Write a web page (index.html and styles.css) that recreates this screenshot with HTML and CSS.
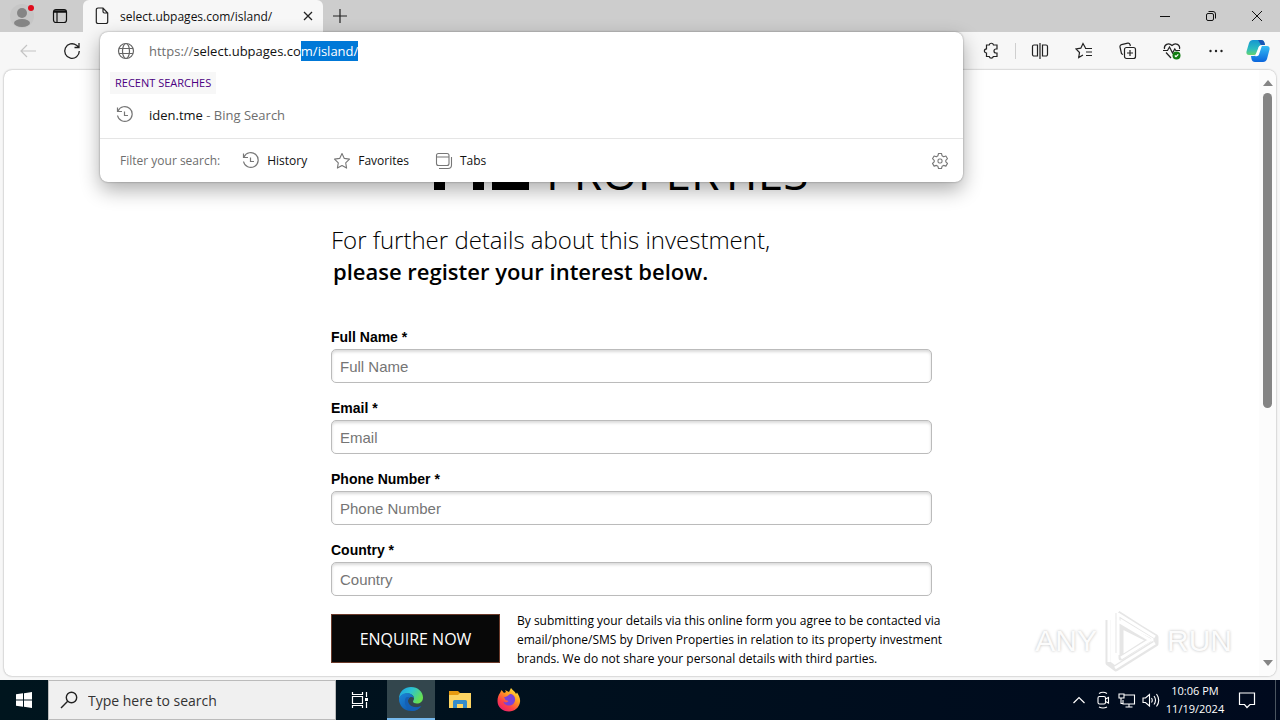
FILE: index.html
```html
<!DOCTYPE html>
<html lang="en">
<head>
  <meta charset="UTF-8">
  <meta name="viewport" content="width=device-width, initial-scale=1.0">
  <title>select.ubpages.com/island/</title>
  <link rel="stylesheet" href="styles.css">
</head>
<body>
  <header class="titlebar">
    <button class="profile" aria-label="Profile">
      <svg width="24" height="24" viewBox="0 0 24 24"><circle cx="12" cy="12" r="12" fill="#c6c6c6"/><circle cx="12" cy="9" r="5" fill="#858585"/><ellipse cx="12" cy="19" rx="8" ry="4" fill="#858585"/><circle cx="21" cy="4" r="3" fill="#e00b1c"/></svg>
    </button>
    <button class="tab-actions" aria-label="Tab actions">
      <svg width="16" height="16" viewBox="0 0 16 16" fill="none" stroke="#111" stroke-width="1.2"><rect x="1.5" y="1.5" width="13" height="13" rx="2.5"/><path d="M2 3.500h12" stroke-width="2.500"/><path d="M5 4v10"/></svg>
    </button>
    <div class="tab">
      <svg width="14" height="18" viewBox="0 0 14 18" fill="none" stroke="#222" stroke-width="1.2"><path d="M8 1H3a1.7 1.7 0 0 0-1.7 1.7v12A1.7 1.7 0 0 0 3 16.500h8a1.7 1.7 0 0 0 1.7-1.8V6zM8 1v3.500A1.5 1.5 0 0 0 9.500 6h3.200"/></svg>
      <span class="tab-title">select.ubpages.com/island/</span>
      <button aria-label="Close tab">
        <svg width="10" height="10" viewBox="0 0 10 10" stroke="#222" stroke-width="1.3"><path d="M1 1l8 8M9 1L1 9"/></svg>
      </button>
    </div>
    <button class="new-tab" aria-label="New tab">
      <svg width="14" height="14" viewBox="0 0 14 14" stroke="#222" stroke-width="1.2"><path d="M7 0v14M0 7h14"/></svg>
    </button>
    <div class="window-buttons">
      <button aria-label="Minimize"><svg width="12" height="12" viewBox="0 0 12 12" stroke="#111"><path d="M1 6.500h10"/></svg></button>
      <button aria-label="Restore"><svg width="12" height="12" viewBox="0 0 12 12" fill="none" stroke="#111"><rect x="1.5" y="3.5" width="7" height="7" rx="1.5"/><path d="M3.500 1.500h4.500a2.5 2.5 0 0 1 2.500 2.500v4.500"/></svg></button>
      <button aria-label="Close"><svg width="12" height="12" viewBox="0 0 12 12" stroke="#111"><path d="M1 1l10 10M11 1L1 11"/></svg></button>
    </div>
  </header>

  <nav class="toolbar">
    <button aria-label="Back"><svg width="18" height="16" viewBox="0 0 18 16" fill="none" stroke="#c4c4c4" stroke-width="1.2"><path d="M8 2L2 8l6 6M2 8h15"/></svg></button>
    <button aria-label="Refresh"><svg width="18" height="18" viewBox="0 0 18 18" fill="none" stroke="#222" stroke-width="1.3"><path d="M16.300 9A7.300 7.300 0 1 1 13.500 3.300L16 5.300M16 1v4.500h-4.500"/></svg></button>
    <div class="tools">
      <button aria-label="Extensions"><svg width="18" height="18" viewBox="0 0 18 18" fill="none" stroke="#222" stroke-width="1.2"><path d="M4.500 3h2.700a2.200 2.200 0 0 1 4.300 0H15v4h-1a2 2 0 0 0 0 4h1v3.500h-3.700a2.100 2.100 0 0 1-4.100 0H4.500V11a2.100 2.100 0 0 1 0-4.200z"/></svg></button>
      <span class="divider"></span>
      <button aria-label="Split screen"><svg width="18" height="18" viewBox="0 0 18 18" fill="none" stroke="#222" stroke-width="1.2"><path d="M6.500 3H3a1.500 1.500 0 0 0-1.500 1.500v8A1.500 1.500 0 0 0 3 14h3.500zM11.500 3H15a1.500 1.500 0 0 1 1.500 1.500v8A1.500 1.500 0 0 1 15 14h-3.500zM9 1v16"/></svg></button>
      <button aria-label="Favorites"><svg width="18" height="18" viewBox="0 0 18 18" fill="none" stroke="#222" stroke-width="1.2"><path d="M10.500 6L8 1.500 5.800 6.200l-4.800.8 3.500 3.500-.8 5L8 13M10 6.500h7M11 10h6M11 13.500h6"/></svg></button>
      <button aria-label="Collections"><svg width="18" height="18" viewBox="0 0 18 18" fill="none" stroke="#222" stroke-width="1.2"><path d="M4 12.500l-1.500-.8L1 5a2 2 0 0 1 1.500-2.400l6.300-1.400A2 2 0 0 1 11 2.500l.4 1.500"/><rect x="5.5" y="5.5" width="11" height="11" rx="2"/><path d="M11 8v6M8 11h6"/></svg></button>
      <button aria-label="Browser essentials"><svg width="18" height="18" viewBox="0 0 18 18" fill="none" stroke="#222" stroke-width="1.2"><path d="M1.500 7C.6 3 5.500-.2 9 3.500 12.500-.2 17.500 3 16.500 7M3 10.500L8 16M0 8.500h4.500L6.500 5l3 6 2.300-4 1 1.500H17"/><circle cx="13.5" cy="13.5" r="4" fill="#107c10" stroke="none"/><path d="M11.800 13.500l1.200 1.200 2.300-2.400" stroke="#fff"/></svg></button>
      <button aria-label="Settings and more"><svg width="18" height="18" viewBox="0 0 18 18" fill="#222"><circle cx="3.5" cy="9" r="1.2"/><circle cx="9" cy="9" r="1.2"/><circle cx="14.5" cy="9" r="1.2"/></svg></button>
      <button class="copilot" aria-label="Copilot">
        <svg width="24" height="24" viewBox="0 0 24 24">
          <defs>
            <linearGradient id="copilotLeft" x1="0" y1="0" x2="0" y2="1"><stop offset="0" stop-color="#1596d1"/><stop offset=".6" stop-color="#2cbcc0"/><stop offset="1" stop-color="#65d46f"/></linearGradient>
            <linearGradient id="copilotRight" x1="0" y1="0" x2="0" y2="1"><stop offset="0" stop-color="#35bdf4"/><stop offset="1" stop-color="#0b65dc"/></linearGradient>
          </defs>
          <path d="M7 1h8c2 0 3 1 3.500 3l.5 2h-3c-2 0-3 1-3.500 3l-1 4c-.6 2-1.500 3-3.500 3H3c-2 0-3-1.500-2.500-3.500L3 4c.7-2 2-3 4-3z" fill="url(#copilotLeft)"/>
          <path d="M12 1h3c2 0 3 1 3.500 3l.5 2h-4z" fill="#1a55b5"/>
          <path d="M17 23H9c-2 0-3-1-3.500-3L5 17h3c2 0 3-1 3.500-3l1-4c.6-2 1.500-3 3.500-3h5c2 0 3 1.500 2.500 3.500L21 20c-.7 2-2 3-4 3z" fill="url(#copilotRight)"/>
          <path d="M12.500 8.500C13 7 14 6.500 16 6.500L13 15.500C12.500 17 11 17.500 9 17z" fill="#fff"/>
        </svg>
      </button>
    </div>
  </nav>

  <section class="omnibox">
    <div class="address">
      <svg width="18" height="18" viewBox="0 0 18 18" fill="none" stroke="#666" stroke-width="1.2"><circle cx="9" cy="9" r="7.5"/><ellipse cx="9" cy="9" rx="3.5" ry="7.5"/><path d="M2 6.500h14M2 11.500h14"/></svg>
      <div class="url" role="textbox" contenteditable="true" aria-label="Address" spellcheck="false"><span class="muted">https://</span>select.ubpages.co<mark>m/island/</mark></div>
    </div>
    <h2>RECENT SEARCHES</h2>
    <a class="suggestion" href="#">
      <svg width="18" height="18" viewBox="0 0 18 18" fill="none" stroke="#777" stroke-width="1.2"><path d="M1.500 1.500v4H6M2 5A7.400 7.400 0 1 1 1.500 9.500M8.500 5.500v4H12"/></svg>
      <span>iden.tme <span class="muted">- Bing Search</span></span>
    </a>
    <div class="filters">
      <span class="muted filter-label">Filter your search:</span>
      <button>
        <svg width="18" height="18" viewBox="0 0 18 18" fill="none" stroke="#777" stroke-width="1.2"><path d="M1.500 1.500v4H6M2 5A7.400 7.400 0 1 1 1.500 9.500M8.500 5.500v4H12"/></svg>
        History
      </button>
      <button>
        <svg width="18" height="18" viewBox="0 0 18 18" fill="none" stroke="#777" stroke-width="1.1"><path d="M9 1.500l2.300 4.900 5.200.7-3.800 3.700.9 5.300L9 13.500l-4.600 2.600.9-5.300L1.500 7.100l5.200-.7z" stroke-linejoin="round"/></svg>
        Favorites
      </button>
      <button>
        <svg width="18" height="18" viewBox="0 0 18 18" fill="none" stroke="#777" stroke-width="1.1"><rect x="1.5" y="1.5" width="12.5" height="12" rx="2"/><path d="M1.500 5H14M4 16.500h9a3.500 3.500 0 0 0 3.500-3.500V5"/></svg>
        Tabs
      </button>
      <button class="filter-settings" aria-label="Search settings">
        <svg width="18" height="18" viewBox="0 0 18 18" fill="none" stroke="#777" stroke-width="1.1"><path d="M7.500 1.500h3l.6 2.300 1.500.9 2.300-.7 1.600 2.700L14.800 8.300v1.500l1.700 1.600-1.600 2.700-2.300-.7-1.500.9-.6 2.200h-3l-.6-2.200-1.500-.9-2.300.7-1.600-2.700 1.700-1.600V8.300L1.500 6.700 3.100 4l2.300.7 1.500-.9z" stroke-linejoin="round"/><rect x="7" y="7" width="4" height="4" rx="1.5"/></svg>
      </button>
    </div>
  </section>

  <div class="viewport">
    <main class="page">
      <div class="logo">
        <svg width="96" height="48" viewBox="0 0 96 48"><path d="M0 0h12l13 20L38 0h12v48H39V18L25 38 11 18v30H0zM58 0h37v10H70v9h22v9H70v10h25v10H58z"/></svg>
        <span>PROPERTIES</span>
      </div>
      <h1>For further details about this investment, <strong>please register your interest below.</strong></h1>
      <form>
        <label for="full_name">Full Name *</label>
        <input type="text" id="full_name" placeholder="Full Name" required>
        <label for="email">Email *</label>
        <input type="email" id="email" placeholder="Email" required>
        <label for="phone">Phone Number *</label>
        <input type="tel" id="phone" placeholder="Phone Number" required>
        <label for="country">Country *</label>
        <input type="text" id="country" placeholder="Country" required>
        <div class="submit-row">
          <button type="submit">ENQUIRE NOW</button>
          <p>By submitting your details via this online form you agree to be contacted via email/phone/SMS by Driven Properties in relation to its property investment brands. We do not share your personal details with third parties.</p>
        </div>
      </form>
    </main>
    <div class="scrollbar">
      <svg width="10" height="6" viewBox="0 0 10 6" fill="#858585"><path d="M5 0l5 6H0z"/></svg>
      <div class="thumb"></div>
      <svg width="10" height="6" viewBox="0 0 10 6" fill="#858585"><path d="M0 0h10L5 6z"/></svg>
    </div>
  </div>

  <div class="watermark">
    <span>ANY</span>
    <svg width="58" height="62" viewBox="0 0 58 62" fill="none"><path d="M15 3l36 23M15 3v40M5 10v43l8 6 40-25V27L15 4M18 16v32l28-18zM13 57l38-24" stroke="#e6e6e6" stroke-width="5" stroke-linejoin="round"/><path d="M15 3v42M6 10v42M15 4l37 23M15 11l32 19-29 18M12 58l40-25" stroke="#fff" stroke-width="3"/></svg>
    <span>RUN</span>
  </div>

  <footer class="taskbar">
    <button class="start" aria-label="Start"><svg width="16" height="16" viewBox="0 0 16 16" fill="#fff"><path d="M0 2.300l7-1v6.200H0zM8 1.200L16 0v7.500H8zM0 8.500h7v6.200l-7-1zM8 8.500h8V16l-8-1.200z"/></svg></button>
    <label class="search">
      <svg width="18" height="18" viewBox="0 0 18 18" fill="none" stroke="#222" stroke-width="1.4"><circle cx="11.5" cy="6.5" r="5.2"/><path d="M7.700 10.300L1 17"/></svg>
      <input type="text" placeholder="Type here to search" aria-label="Type here to search">
    </label>
    <button class="app" aria-label="Task view"><svg width="18" height="18" viewBox="0 0 18 18" fill="none" stroke="#fff" stroke-width="1.2"><path d="M1.500 1v2.500h10V1M1.500 17v-2.500h10V17M1.500 5.500h10v7h-10zM15.500 1v5M15.500 11v6"/><path d="M14 7h3v3h-3z" fill="#fff" stroke="none"/></svg></button>
    <button class="app active" aria-label="Microsoft Edge">
      <svg width="24" height="24" viewBox="0 0 24 24">
        <defs>
          <linearGradient id="edgeTop" x1="0" y1="0" x2="1" y2=".5"><stop offset="0" stop-color="#1b9de2"/><stop offset=".5" stop-color="#2cc3d2"/><stop offset="1" stop-color="#66e052"/></linearGradient>
          <linearGradient id="edgeLow" x1="0" y1="0" x2="1" y2="1"><stop offset="0" stop-color="#1b86d8"/><stop offset="1" stop-color="#0c4da2"/></linearGradient>
        </defs>
        <path d="M0 12C0 4 6 0 12 0c7 0 12 5 12 10.500 0 4-3 6-6 6-2.500 0-4-1-4-2 0-.8 1-1.200 1-3C15 8.500 12 6.500 8.500 6.500 4 6.500 1 9 0 12z" fill="url(#edgeTop)"/>
        <path d="M0 12c.8-4 4-5.800 8-5.800 3.500 0 6.500 2 7 4.800-3-2.500-6-.5-6 3 0 5 5.500 8 12.500 5.200C19.500 22.200 16 24 12 24 5 24 0 18.500 0 12z" fill="url(#edgeLow)"/>
        <path d="M7 10.500C4 15 7 22 13 24c4 0 7.500-2 9.500-5-6 3-13.500 0-13.500-5 0-1.700.7-3 1.800-3.700-1.300-.6-2.800-.5-3.800.2z" fill="#1460b5"/>
      </svg>
    </button>
    <button class="app" aria-label="File Explorer"><svg width="24" height="20" viewBox="0 0 24 20"><path d="M1 1h9l2 2h10v5H1z" fill="#e69a10"/><path d="M1 5h9l2-2h11v15H1z" fill="#fcd462"/><path d="M5 18V11.500A1.500 1.500 0 0 1 6.500 10h11a1.500 1.500 0 0 1 1.500 1.500V18h-4v-4H9v4z" fill="#348ccb"/></svg></button>
    <button class="app" aria-label="Firefox">
      <svg width="24" height="24" viewBox="0 0 24 24">
        <defs><linearGradient id="fox" x1=".9" y1="0" x2=".2" y2="1"><stop offset="0" stop-color="#fff044"/><stop offset=".4" stop-color="#ff9a20"/><stop offset=".7" stop-color="#ff4444"/><stop offset="1" stop-color="#e81c70"/></linearGradient></defs>
        <path d="M3 5l1.500-3L7 5l2-1-1-2 4 2 2-4c2 2.500 4 3.500 5 6l1-1.500c2 3 3.500 6 3 9.500-.7 5.500-5.500 9.500-11 9.500C5.500 23.500.5 19 .5 13 .5 9.500 1.500 7 3 5z" fill="url(#fox)"/>
        <path d="M7 9c4 0 4-3 7-3 3 1 4.500 3.500 4 6.500-.5 3-3 5-6 5s-5.500-2-5.500-4c2 1.500 4 1 5-.5L8.500 12z" fill="#7a42d8"/>
      </svg>
    </button>
    <div class="tray">
      <button aria-label="Show hidden icons"><svg width="14" height="18" viewBox="0 0 14 18" fill="none" stroke="#fff" stroke-width="1.2"><path d="M1.500 12L7 6.500l5.500 5.500"/></svg></button>
      <button aria-label="Meet now"><svg width="16" height="18" viewBox="0 0 16 18" fill="none" stroke="#fff" stroke-width="1.1"><rect x="3" y="5.5" width="7.5" height="7.5" rx="1.5"/><path d="M10.500 8l3-1.500v5.500l-3-1.500M4 2.500q4-2.500 8 0M4 16q4 2 8 0"/></svg></button>
      <button aria-label="Network"><svg width="18" height="18" viewBox="0 0 18 18" fill="none" stroke="#fff" stroke-width="1.1"><path d="M6 4h10.500v9H5V9M11 13v3M7.500 16h7M1 3h5v4H1zM3 7v5.500h2"/></svg></button>
      <button aria-label="Volume"><svg width="18" height="18" viewBox="0 0 18 18" fill="none" stroke="#fff" stroke-width="1.1"><path d="M1 7v4.500h2.500L7.500 15V3.500L3.500 7zM9.500 7q1.500 2.300 0 4.500M12 5q3 4.300 0 8.500M14.500 3q4.500 6.300 0 12.500"/></svg></button>
      <time datetime="2024-11-19T22:06">10:06 PM<br>11/19/2024</time>
      <button class="notifications" aria-label="Notifications"><svg width="18" height="18" viewBox="0 0 18 18" fill="none" stroke="#fff" stroke-width="1.2"><path d="M1.500 2h15v11.500H12L9 16.500l-2.500-3h-5z"/></svg></button>
      <span class="show-desktop"></span>
    </div>
  </footer>
</body>
</html>
```

FILE: styles.css
```css
* {
  box-sizing: border-box;
}

body {
  margin: 0;
  height: 100vh;
  display: flex;
  flex-direction: column;
  position: relative;
  overflow: hidden;
  background-color: #f7f7f7;
  font-family: "Open Sans", sans-serif;
  font-size: 12px;
  color: #111;
}

button {
  display: flex;
  align-items: center;
  justify-content: center;
  padding: 0;
  border: none;
  background: none;
  font-family: inherit;
  font-size: inherit;
  color: inherit;
}

svg {
  flex: none;
}

/* title bar */
.titlebar {
  display: flex;
  flex: none;
  height: 32px;
  background-color: #cdcdcd;
}

.profile {
  width: 44px;
}

.tab-actions {
  width: 32px;
}

.tab {
  display: flex;
  align-items: center;
  width: 240px;
  margin-left: 7px;
  padding: 0 10px 0 12px;
  background-color: #f7f7f7;
  border-radius: 6px 6px 0 0;
}

.tab-title {
  flex: 1;
  margin-left: 11px;
  white-space: nowrap;
}

.new-tab {
  width: 34px;
}

.window-buttons {
  display: flex;
  margin-left: auto;
}

.window-buttons button {
  width: 46px;
}

/* toolbar */
.toolbar {
  display: flex;
  align-items: center;
  flex: none;
  height: 38px;
  padding: 0 2px 0 6px;
}

.toolbar button {
  width: 44px;
  height: 32px;
}

.tools {
  display: flex;
  align-items: center;
  margin-left: auto;
}

.divider {
  width: 1px;
  height: 16px;
  margin: 0 2px;
  background-color: #cfcfcf;
}

.toolbar .copilot {
  width: 40px;
}

/* address drop-down */
.omnibox {
  position: absolute;
  z-index: 2;
  top: 32px;
  left: 100px;
  right: 317px;
  background-color: #fff;
  border-radius: 8px;
  box-shadow: 0 0 2px rgba(0, 0, 0, 0.4), 0 8px 20px rgba(0, 0, 0, 0.32);
}

.address,
.suggestion {
  display: flex;
  align-items: center;
  gap: 14px;
  height: 38px;
  padding-left: 17px;
  font-size: 13px;
}

.url {
  outline: none;
}

.url mark {
  padding: 1px 0;
  background-color: #0078d7;
  color: #fff;
}

.muted {
  color: #6e6e6e;
}

.omnibox h2 {
  width: fit-content;
  margin: 2px 0 0 10px;
  padding: 0 5px;
  background-color: #f7f7f7;
  font-size: 11px;
  font-weight: 400;
  line-height: 22px;
  color: #4b0082;
}

.suggestion {
  height: 44px;
  padding: 0 0 2px 16px;
  gap: 15px;
  color: #111;
  text-decoration: none;
}

.filters {
  display: flex;
  align-items: center;
  height: 44px;
  padding: 0 14px 0 20px;
  border-top: 1px solid #e5e5e5;
}

.filter-label {
  margin-right: 22px;
}

.filters button {
  gap: 7px;
  margin-right: 26px;
}

.filters .filter-settings {
  margin: 0 0 0 auto;
}

/* page */
.viewport {
  display: flex;
  flex: 1;
  min-height: 0;
  margin: 0 4px 4px;
  overflow: hidden;
  background-color: #fff;
  border-radius: 8px;
  box-shadow: 0 0 2px rgba(0, 0, 0, 0.4);
}

.page {
  flex: 1;
  padding: 72px 16px 0;
  overflow: hidden;
}

.logo,
.page h1,
.page form {
  max-width: 601px;
  margin: 0 auto;
}

.logo {
  display: flex;
  align-items: flex-end;
  gap: 16px;
  height: 48px;
  padding-left: 103px;
  font-size: 46px;
  line-height: 36px;
  color: #000;
}

.page h1 {
  margin-top: 34px;
  font-size: 24px;
  font-weight: 300;
  line-height: 32px;
  color: #000;
}

.page strong {
  display: block;
  padding-left: 2px;
  font-size: 22px;
  font-weight: 600;
  line-height: 30px;
}

.page form {
  margin-top: 41px;
}

.page form label {
  display: block;
  margin-bottom: 2px;
  font: bold 14px/20px "Liberation Sans", Arial, sans-serif;
  color: #000;
}

.page form input {
  display: block;
  width: 100%;
  height: 34px;
  margin-bottom: 15px;
  padding: 0 8px;
  border: 1px solid #bbb;
  border-radius: 5px;
  box-shadow: inset 0 2px 3px rgba(0, 0, 0, 0.15);
  font: 15px "Liberation Sans", Arial, sans-serif;
}

.page form input::placeholder {
  color: #757575;
}

.submit-row {
  display: flex;
  align-items: flex-start;
  gap: 17px;
  margin-right: -20px;
}

.submit-row button {
  flex: none;
  width: 169px;
  height: 49px;
  margin-top: 3px;
  background-color: #080808;
  border: 1px solid #6b3a2a;
  font-size: 16px;
  color: #fff;
}

.submit-row p {
  margin: 0;
  line-height: 19px;
  color: #000;
}

.scrollbar {
  display: flex;
  flex-direction: column;
  align-items: center;
  width: 17px;
  padding: 10px 0;
  background-color: #fcfcfc;
}

.thumb {
  width: 9px;
  height: 315px;
  margin: 7px 0 auto;
  background-color: #858585;
  border-radius: 5px;
}

/* watermark over the page */
.watermark {
  position: absolute;
  right: 48px;
  bottom: 48px;
  display: flex;
  align-items: center;
  gap: 6px;
  font-family: "Liberation Sans Narrow", "Liberation Sans", sans-serif;
  font-size: 30px;
  color: #fcfcfc;
  text-shadow: 0 0 3px #bbb;
}

/* taskbar */
.taskbar {
  display: flex;
  flex: none;
  height: 40px;
  background: linear-gradient(to right, #00151e, #000a1e);
  color: #fff;
}

.start {
  width: 48px;
}

.search {
  display: flex;
  align-items: center;
  gap: 10px;
  width: 288px;
  padding-left: 11px;
  background-color: #f0f0f0;
  border: 1px solid #bbb;
}

.search input {
  flex: 1;
  min-width: 0;
  padding: 0;
  border: none;
  outline: none;
  background: none;
  font-family: inherit;
  font-size: 14px;
}

.search input::placeholder {
  color: #333;
}

.app {
  width: 48px;
  margin-right: 1px;
}

.app.active {
  margin-left: 2px;
  background-color: #33464d;
  border-bottom: 2px solid #76b9ed;
}

.tray {
  display: flex;
  align-items: center;
  margin-left: auto;
}

.tray button {
  width: 24px;
}

.tray time {
  width: 64px;
  font-size: 11px;
  line-height: 18px;
  text-align: center;
}

.tray .notifications {
  width: 40px;
}

.show-desktop {
  width: 5px;
  height: 40px;
  margin-left: 8px;
  border-left: 1px solid #4a5560;
}
```
